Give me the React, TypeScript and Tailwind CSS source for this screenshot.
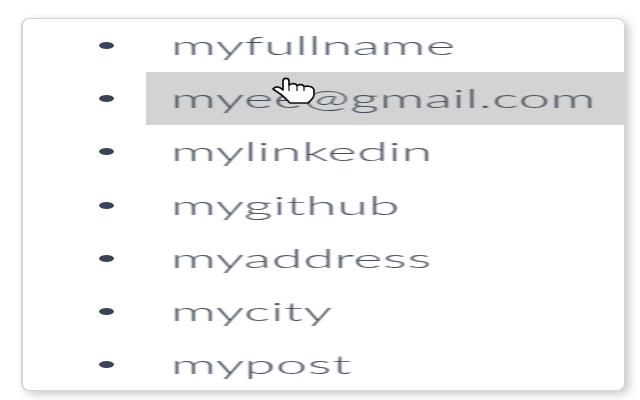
import React from "react";

const ITEMS = ["myfullname", "myee@gmail.com", "mylinkedin", "mygithub", "myaddress", "mycity", "mypost"];

// pointer cursor, drawn over the hovered row
function HandCursor() {
  return (
    <svg className="absolute left-[271px] top-[77px]" width="44" height="27" viewBox="0 0 44 27">
      <path
        d="M12 13V4c0-3.500 6-3.500 6 0v4c3-2 7-2 8 .5 3-1.500 6-1 7 1 4-1 9 0 10 3v5c0 3-3 6-6 8.500H19c-3-3.500-6-6-9-8.500L2 12c2-3 6-3 10 1z"
        fill="#ffffff"
        stroke="#111111"
        strokeWidth="1.700"
        strokeLinejoin="round"
      />
      <path d="M18 8v6M26 9v5M33 10v4" stroke="#111111" strokeWidth="1.200" fill="none" />
    </svg>
  );
}

export default function App() {
  return (
    <div className="relative h-[400px] w-[640px] overflow-hidden bg-white pb-[9px] pl-[21px] pr-[15px] pt-[18px] font-['Lato',sans-serif]">
      <ul className="h-full overflow-hidden rounded-[8px] border border-l-2 border-[#d4d4d4] bg-white shadow-[4px_3px_10px_rgba(0,0,0,0.22)]">
        {ITEMS.map((item, i) => (
          <li key={item} className="flex h-[53.200px] items-center">
            <span className="ml-[76px] h-[7px] w-[15px] shrink-0 rounded-[50%] bg-[#3a4358]" />
            <div className={`ml-[32px] flex h-full flex-1 items-center pl-[25px] ${i === 1 ? "bg-[#d3d3d3]" : ""}`}>
              <span className="inline-block origin-left scale-x-[2.23] whitespace-nowrap text-[25px] font-light leading-none tracking-[0.300px] text-[#434c5a] blur-[0.4px]">
                {item}
              </span>
            </div>
          </li>
        ))}
      </ul>
      <HandCursor />
    </div>
  );
}
